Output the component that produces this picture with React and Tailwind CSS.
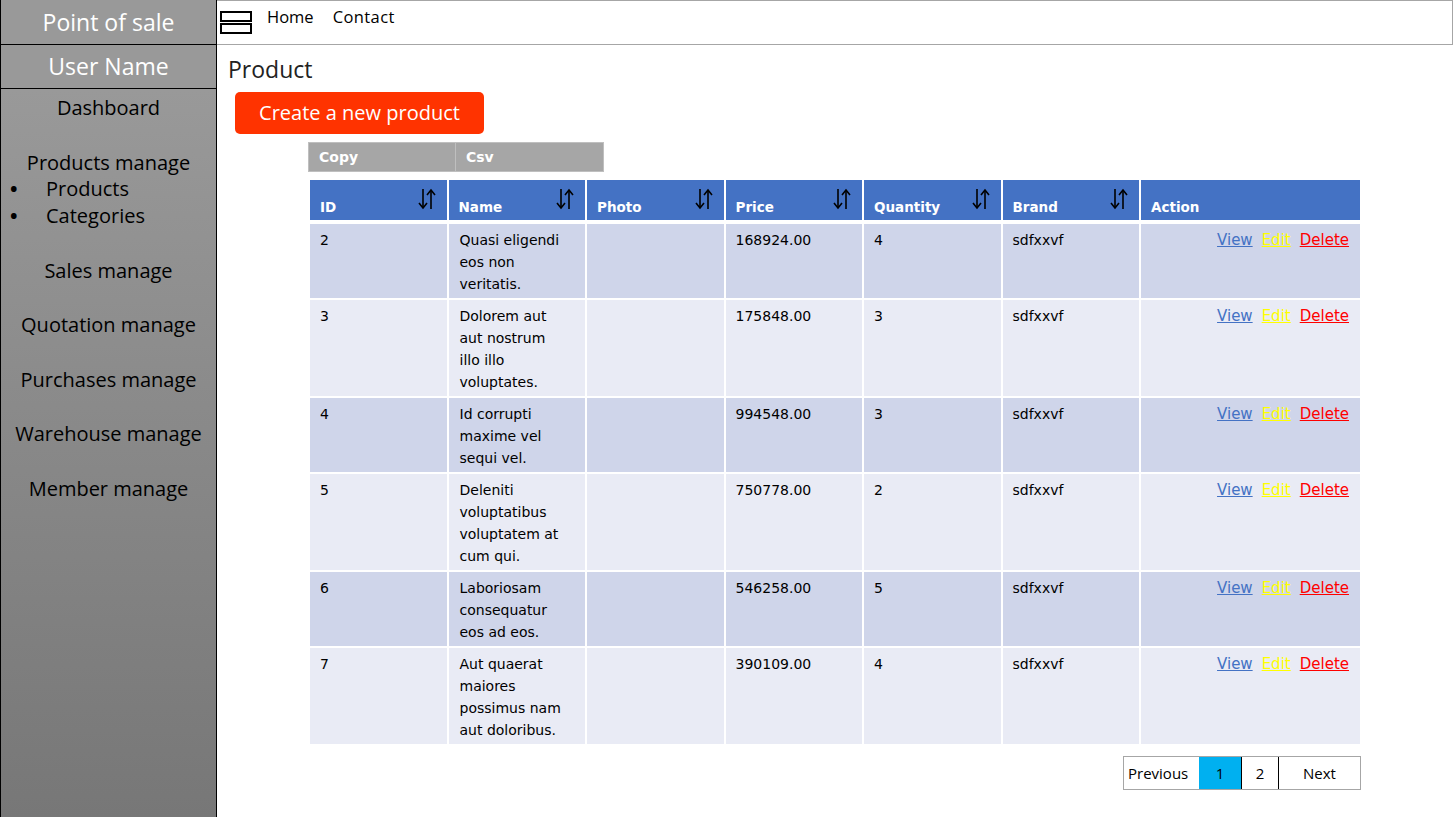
import React from "react";

const products = [
  { id: 2, name: ["Quasi eligendi", "eos non", "veritatis."], price: "168924.00", qty: 4, brand: "sdfxxvf" },
  { id: 3, name: ["Dolorem aut", "aut nostrum", "illo illo", "voluptates."], price: "175848.00", qty: 3, brand: "sdfxxvf" },
  { id: 4, name: ["Id corrupti", "maxime vel", "sequi vel."], price: "994548.00", qty: 3, brand: "sdfxxvf" },
  { id: 5, name: ["Deleniti", "voluptatibus", "voluptatem at", "cum qui."], price: "750778.00", qty: 2, brand: "sdfxxvf" },
  { id: 6, name: ["Laboriosam", "consequatur", "eos ad eos."], price: "546258.00", qty: 5, brand: "sdfxxvf" },
  { id: 7, name: ["Aut quaerat", "maiores", "possimus nam", "aut doloribus."], price: "390109.00", qty: 4, brand: "sdfxxvf" },
];

const columns = [
  { label: "ID", sort: true },
  { label: "Name", sort: true },
  { label: "Photo", sort: true },
  { label: "Price", sort: true },
  { label: "Quantity", sort: true },
  { label: "Brand", sort: true },
  { label: "Action", sort: false },
];

const dejavu = { fontFamily: '"DejaVu Sans", "Open Sans", sans-serif' };

function SortIcon() {
  return (
    <svg width="20" height="26" viewBox="0 0 20 26" className="absolute right-[10px] top-[6px]">
      <g stroke="#000" strokeWidth="1.6" fill="none">
        <line x1="6" y1="3" x2="6" y2="22" />
        <polyline points="2,17 6,22 10,17" />
        <line x1="14" y1="23" x2="14" y2="4" />
        <polyline points="10,9 14,4 18,9" />
      </g>
    </svg>
  );
}

function Sidebar() {
  const item = "text-[20px] leading-[24px] text-black text-center";
  return (
    <aside className="w-[217px] h-[817px] shrink-0 flex flex-col border-l border-r border-black">
      <div className="h-[45px] bg-[#999999] border-b border-black flex items-center justify-center text-white text-[23px]">
        Point of sale
      </div>
      <div className="h-[44px] bg-[#999999] border-b border-black flex items-center justify-center text-white text-[23px]">
        User Name
      </div>
      <nav className="flex-1 bg-gradient-to-b from-[#999999] to-[#777777] pt-[7px]">
        <div className={item}>Dashboard</div>
        <div className={`${item} mt-[31px]`}>Products manage</div>
        <ul className="text-[20px] leading-[27px] text-black">
          <li className="flex items-center">
            <span className="w-[45px] pl-[9px] font-bold">•</span>Products
          </li>
          <li className="flex items-center">
            <span className="w-[45px] pl-[9px] font-bold">•</span>Categories
          </li>
        </ul>
        <div className={`${item} mt-[30px]`}>Sales manage</div>
        <div className={`${item} mt-[30px]`}>Quotation manage</div>
        <div className={`${item} mt-[31px]`}>Purchases manage</div>
        <div className={`${item} mt-[30px]`}>Warehouse manage</div>
        <div className={`${item} mt-[31px]`}>Member manage</div>
      </nav>
    </aside>
  );
}

function TopNav() {
  return (
    <header className="h-[45px] border border-[#a6a6a6] border-l-0 flex items-start bg-white">
      <svg width="32" height="24" viewBox="0 0 32 24" className="ml-[3px] mt-[10px]">
        <rect x="1" y="1" width="30" height="9" fill="none" stroke="#000" strokeWidth="2" />
        <rect x="1" y="13" width="30" height="9" fill="none" stroke="#000" strokeWidth="2" />
      </svg>
      <a className="ml-[15px] mt-[4px] text-[16.5px] text-black">Home</a>
      <a className="ml-[19px] mt-[4px] text-[16.5px] tracking-[0.4px] text-black">Contact</a>
    </header>
  );
}

function App() {
  return (
    <div
      className="w-[1453px] h-[817px] flex bg-white overflow-hidden"
      style={{ fontFamily: '"Open Sans", "Noto Sans", sans-serif' }}
    >
      <Sidebar />
      <main className="flex-1 flex flex-col">
        <TopNav />
        <h1 className="ml-[11px] mt-[9px] text-[23px] leading-[30px] text-[#222]">Product</h1>
        <button className="ml-[18px] mt-[8px] w-[249px] h-[42px] rounded-[5px] bg-[#ff3300] text-white text-[20px] self-start">
          Create a new product
        </button>
        <div className="ml-[91px] mt-[8px] flex self-start" style={dejavu}>
          <button className="w-[148px] h-[30px] bg-[#a6a6a6] border border-[#bfbfbf] text-left pl-[10px] pt-[1px] text-[14px] font-bold text-white">
            Copy
          </button>
          <button className="w-[148px] h-[30px] bg-[#a6a6a6] border border-[#bfbfbf] border-l-0 text-left pl-[10px] pt-[1px] text-[14px] font-bold text-white">
            Csv
          </button>
        </div>

        <div
          className="ml-[93px] mt-[8px] w-[1050px] grid grid-cols-[136.5px_136.5px_136.5px_136.5px_136.5px_136.5px_1fr] gap-x-[2px] gap-y-[2px]"
          style={dejavu}
        >
          {columns.map((c) => (
            <div
              key={c.label}
              className="relative h-[40px] bg-[#4472c4] text-white font-bold text-[13.5px] pl-[10px] pt-[17px] mb-[2px]"
            >
              {c.label}
              {c.sort && <SortIcon />}
            </div>
          ))}
          {products.map((p, i) => {
            const bg = i % 2 === 0 ? "bg-[#cfd5ea]" : "bg-[#e9ebf5]";
            const cell = `${bg} pl-[10px] pt-[5px] pb-[3px] text-[14px] leading-[22px] text-black`;
            return (
              <React.Fragment key={p.id}>
                <div className={cell}>{p.id}</div>
                <div className={`${cell} pl-[11px]`}>
                  {p.name.map((line) => (
                    <div key={line}>{line}</div>
                  ))}
                </div>
                <div className={cell}></div>
                <div className={cell}>{p.price}</div>
                <div className={cell}>{p.qty}</div>
                <div className={cell}>{p.brand}</div>
                <div className={`${cell} flex justify-end items-start gap-[9px] pr-[11px] text-[15px]`}>
                  <a className="underline text-[#4472c4]">View</a>
                  <a className="underline text-[#ffff00]">Edit</a>
                  <a className="underline text-[#ff0000]">Delete</a>
                </div>
              </React.Fragment>
            );
          })}
        </div>

        <div className="ml-[906px] mt-[12px] flex self-start h-[34px] border border-[#a6a6a6] text-[15px] text-black">
          <button className="w-[75px] h-full pl-[4px] text-left">Previous</button>
          <button className="w-[43px] h-full bg-[#00b0f0] border-r border-black">1</button>
          <button className="w-[37px] h-full border-r border-black">2</button>
          <button className="w-[81px] h-full">Next</button>
        </div>
      </main>
    </div>
  );
}

export default App;
